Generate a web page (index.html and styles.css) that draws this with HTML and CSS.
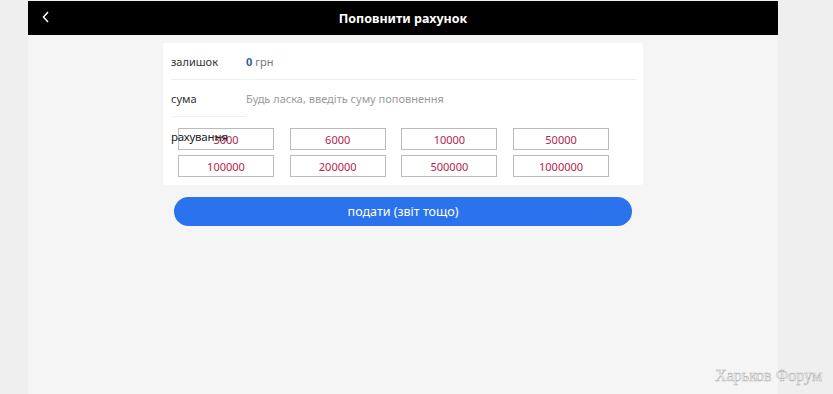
FILE: index.html
```html
<!DOCTYPE html>
<html lang="uk">
<head>
  <meta charset="UTF-8">
  <meta name="viewport" content="width=device-width, initial-scale=1.0">
  <title>Поповнити рахунок</title>
  <link rel="stylesheet" href="styles.css">
</head>
<body>
  <div class="page">
    <header class="header">
      <span class="back">
        <svg width="8" height="12" viewBox="0 0 8 12"><path d="M6 1 L1.5 6 L6 11" fill="none" stroke="#fff" stroke-width="1.5"/></svg>
      </span>
      <h1>Поповнити рахунок</h1>
    </header>

    <div class="card">
      <div class="row">
        <span class="label">залишок</span>
        <span class="value"><b>0</b> грн</span>
      </div>
      <div class="row short">
        <span class="label">сума</span>
        <input type="text" class="amount" placeholder="Будь ласка, введіть суму поповнення">
      </div>
      <div class="quick">
        <span class="quick-label">рахування</span>
        <div class="options">
          <div class="option">3000</div>
          <div class="option">6000</div>
          <div class="option">10000</div>
          <div class="option">50000</div>
          <div class="option">100000</div>
          <div class="option">200000</div>
          <div class="option">500000</div>
          <div class="option">1000000</div>
        </div>
      </div>
    </div>

    <button class="submit">подати (звіт тощо)</button>
  </div>
  <div class="watermark">Харьков Форум</div>
</body>
</html>
```

FILE: styles.css
```css
html, body {
  margin: 0;
  height: 100%;
}

body {
  background-color: #efefef;
  font-family: "Noto Sans", "Open Sans", sans-serif;
  font-size: 11px;
  color: #333;
  padding-top: 1px;
  box-sizing: border-box;
  overflow: hidden;
}

.page {
  width: 750px;
  margin-left: 28px;
  height: 100%;
  background-color: #f5f5f5;
}

.header {
  height: 34px;
  background-color: #000;
  color: #fff;
  display: flex;
  align-items: center;
  justify-content: center;
  position: relative;
}

.header h1 {
  margin: 0;
  font-size: 12.5px;
  font-weight: bold;
}

.back {
  position: absolute;
  left: 14px;
  top: 10px;
}

.card {
  width: 480px;
  margin: 8px auto 0;
  background-color: #fff;
  border-radius: 3px;
  padding: 0 7px 8px 8px;
  box-sizing: border-box;
}

.row {
  display: flex;
  align-items: center;
  height: 37px;
  border-bottom: 1px solid #eee;
  box-sizing: border-box;
}

.row.short {
  border-bottom: none;
  background-image: linear-gradient(#eee, #eee);
  background-size: 75px 1px;
  background-position: left bottom;
  background-repeat: no-repeat;
}

.label {
  width: 75px;
  color: #333;
}

.value {
  color: #777;
}

.value b {
  color: #3b5aa6;
}

.amount {
  border: none;
  outline: none;
  font-family: inherit;
  font-size: 11px;
  padding: 0;
  width: 300px;
  color: #333;
}

.amount::placeholder {
  color: #9a9a9a;
}

.quick {
  display: flex;
  padding-top: 11px;
}

.quick-label {
  width: 0;
  white-space: nowrap;
  position: relative;
  z-index: 1;
  margin-top: 1px;
  color: #222;
  font-size: 11.5px;
  letter-spacing: -0.2px;
}

.options {
  margin-left: 7px;
  display: grid;
  grid-template-columns: repeat(4, 96px);
  column-gap: 15.7px;
  row-gap: 5px;
}

.option {
  height: 22px;
  border: 1px solid #bbb;
  box-sizing: border-box;
  display: flex;
  align-items: center;
  justify-content: center;
  color: #b3254a;
}

.submit {
  display: block;
  width: 458px;
  height: 29px;
  margin: 12px auto 0;
  border: none;
  border-radius: 15px;
  background-color: #2b73ec;
  color: #fff;
  font-family: inherit;
  font-size: 12.5px;
}

.watermark {
  position: absolute;
  right: 11px;
  bottom: 9px;
  font-family: "Liberation Serif", serif;
  font-size: 16px;
  color: #fafafa;
  -webkit-text-stroke: 0.5px #b0b0b0;
}
```
